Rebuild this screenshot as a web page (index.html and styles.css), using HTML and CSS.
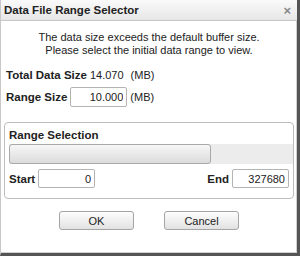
FILE: index.html
```html
<!DOCTYPE html>
<html lang="en">
<head>
    <meta charset="UTF-8">
    <title>Data File Range Selector</title>
    <link rel="stylesheet" href="styles.css">
</head>
<body>
    <div class="dialog">
        <div class="titlebar">
            <span class="title">Data File Range Selector</span>
            <span class="close">&times;</span>
        </div>
        <div class="dialog-body">
            <p class="message">The data size exceeds the default buffer size.<br>Please select the initial data range to view.</p>

            <div class="row">
                <span class="label">Total Data Size</span>
                <span class="value">14.070</span>
                <span class="unit total-unit">(MB)</span>
            </div>
            <div class="row">
                <span class="label">Range Size</span>
                <input class="field size-field" type="text" value="10.000">
                <span class="unit">(MB)</span>
            </div>

            <div class="range-box">
                <div class="range-title">Range Selection</div>
                <div class="slider">
                    <div class="slider-handle" style="width: 71%"></div>
                </div>
                <div class="range-inputs">
                    <div class="range-field">
                        <span class="label">Start</span>
                        <input class="field" type="text" value="0">
                    </div>
                    <div class="range-field">
                        <span class="label">End</span>
                        <input class="field" type="text" value="327680">
                    </div>
                </div>
            </div>

            <div class="buttons">
                <button>OK</button>
                <button>Cancel</button>
            </div>
        </div>
    </div>
</body>
</html>
```

FILE: styles.css
```css
* {
    margin: 0;
    padding: 0;
    box-sizing: border-box;
}

body {
    width: 300px;
    height: 256px;
    font-family: 'Liberation Sans', Arial, sans-serif;
    font-size: 11px;
    color: #222;
    background-color: #fff;
}

/* Dialog frame */
.dialog {
    width: 300px;
    height: 256px;
    border-left: 1px solid #c8c8c8;
    border-right: 3px solid #555;
    border-bottom: 3px solid #555;
    box-shadow: inset -1px -1px 0 #d0d0d0;
}

.titlebar {
    height: 21px;
    display: flex;
    justify-content: space-between;
    align-items: center;
    padding: 0 6px 0 3px;
    background: linear-gradient(#fafafa, #e6e6e6);
    border-bottom: 1px solid #c6c6c6;
}

.title {
    font-weight: bold;
    font-size: 11.5px;
    color: #222;
}

.close {
    font-size: 13px;
    font-weight: bold;
    color: #888;
}

.dialog-body {
    padding: 0 3px 0 3px;
}

.message {
    margin-top: 10px;
    text-align: center;
    line-height: 13px;
}

/* Size rows */
.row {
    display: flex;
    align-items: center;
    gap: 3px;
    height: 20px;
    padding-left: 2px;
}

.row:first-of-type {
    margin-top: 8px;
    margin-bottom: 2px;
}

.label {
    font-weight: bold;
    font-size: 11.5px;
}

.total-unit {
    margin-left: 4px;
}

.field {
    height: 19px;
    border: 1px solid #b4b4b4;
    border-radius: 2px;
    padding: 0 3px;
    text-align: right;
    font-family: 'Liberation Sans', Arial, sans-serif;
    font-size: 11px;
    color: #222;
    width: 57px;
}

.size-field {
    height: 20px;
}

/* Range Selection */
.range-box {
    margin-top: 15px;
    border: 1px solid #bdbdbd;
    border-radius: 4px;
    padding: 5px 0 10px 4px;
}

.range-title {
    font-weight: bold;
    font-size: 11.5px;
    line-height: 14px;
}

.slider {
    margin-top: 2px;
    height: 20px;
    background-color: #ececec;
}

.slider-handle {
    height: 100%;
    border: 1px solid #a9a9a9;
    border-radius: 3px;
    background: linear-gradient(#f7f7f7, #dcdcdc);
}

.range-inputs {
    display: flex;
    justify-content: space-between;
    margin-top: 5px;
    padding-right: 4px;
}

.range-field {
    display: flex;
    align-items: center;
    gap: 3px;
}

/* Buttons */
.buttons {
    display: flex;
    justify-content: center;
    gap: 30px;
    margin-top: 12px;
}

.buttons button {
    width: 75px;
    height: 19px;
    border: 1px solid #a5a5a5;
    border-radius: 3px;
    background: linear-gradient(#fdfdfd, #e2e2e2);
    font-family: 'Liberation Sans', Arial, sans-serif;
    font-size: 11px;
    color: #222;
}
```
